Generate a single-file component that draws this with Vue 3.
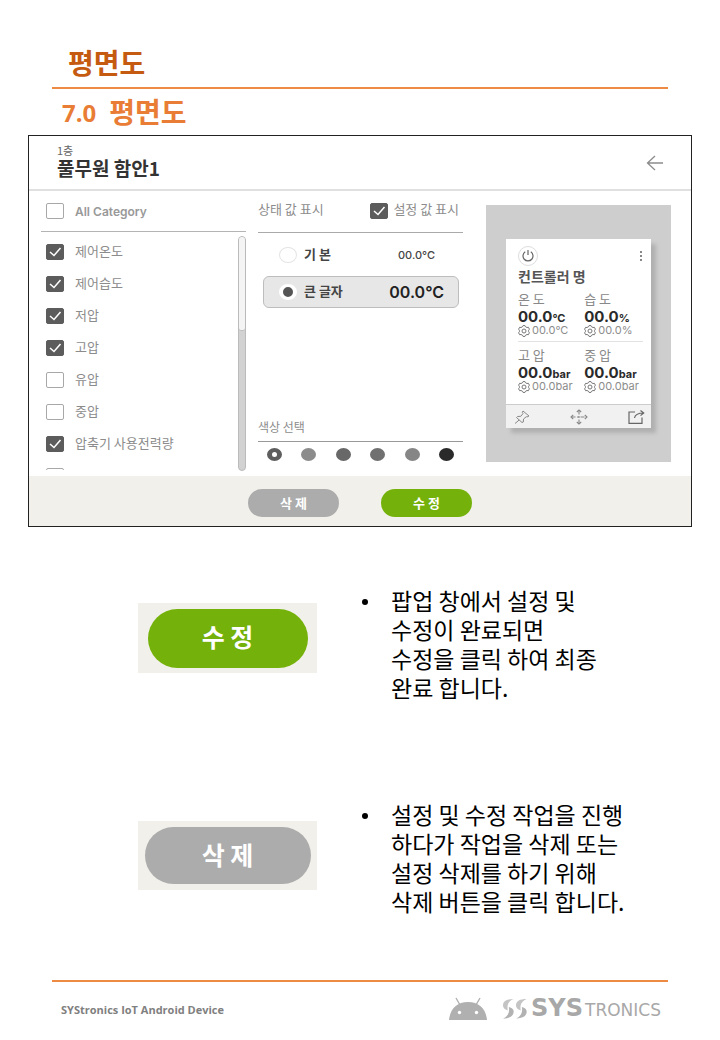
<script setup>
import { ref } from 'vue'

const allCategory = ref(false)
const showSetValue = ref(true)
const textSize = ref('large')
const colour = ref('c1')

const categories = ref([
  { name: '제어온도', on: true },
  { name: '제어습도', on: true },
  { name: '저압', on: true },
  { name: '고압', on: true },
  { name: '유압', on: false },
  { name: '중압', on: false },
  { name: '압축기 사용전력량', on: true },
  { name: '', on: false },
])

const sizes = [
  { id: 'basic', name: '기 본' },
  { id: 'large', name: '큰 글자' },
]

const colours = ['c1', 'c2', 'c3', 'c4', 'c5', 'c6']

const readings = [
  [
    { name: '온 도', unit: '°C' },
    { name: '습 도', unit: '%' },
  ],
  [
    { name: '고 압', unit: 'bar' },
    { name: '중 압', unit: 'bar' },
  ],
]

const notes = [
  {
    kind: 'edit',
    label: '수 정',
    lines: ['팝업 창에서 설정 및', '수정이 완료되면', '수정을 클릭 하여 최종', '완료 합니다.'],
  },
  {
    kind: 'remove',
    label: '삭 제',
    lines: ['설정 및 수정 작업을 진행', '하다가 작업을 삭제 또는', '설정 삭제를 하기 위해', '삭제 버튼을 클릭 합니다.'],
  },
]
</script>

<template>
  <main class="page">
    <h1 class="title">평면도</h1>
    <h2 class="subtitle"><span class="number">7.0</span> 평면도</h2>

    <section class="panel">
      <header class="panel-head">
        <div>
          <p class="floor">1층</p>
          <h3 class="site">풀무원 함안1</h3>
        </div>
        <button class="icon-button" type="button" aria-label="뒤로">
          <svg width="18" height="16" viewBox="0 0 18 16" fill="none" stroke="#8c8c8c" stroke-width="1.3">
            <path d="M17 8H1.5M9 1L1.5 8L9 15" />
          </svg>
        </button>
      </header>

      <div class="panel-body">
        <div class="categories">
          <label class="check all">
            <span class="box">
              <input v-model="allCategory" type="checkbox" />
              <svg viewBox="0 0 18 16"><path d="M4 8L8 11.5L14.5 4" /></svg>
            </span>
            All Category
          </label>
          <div class="scroller">
            <div class="list">
              <label v-for="(c, i) in categories" :key="i" class="check">
                <span class="box">
                  <input v-model="c.on" type="checkbox" :aria-label="c.name || '기타'" />
                  <svg viewBox="0 0 18 16"><path d="M4 8L8 11.5L14.5 4" /></svg>
                </span>
                <span class="check-text">{{ c.name }}</span>
              </label>
            </div>
            <div class="track"><div class="thumb"></div></div>
          </div>
        </div>

        <div class="options">
          <div class="options-head">
            <span class="check-text">상태 값 표시</span>
            <label class="check tight">
              <span class="box">
                <input v-model="showSetValue" type="checkbox" />
                <svg viewBox="0 0 18 16"><path d="M4 8L8 11.5L14.5 4" /></svg>
              </span>
              <span class="check-text">설정 값 표시</span>
            </label>
          </div>
          <label
            v-for="s in sizes"
            :key="s.id"
            class="size"
            :class="[s.id, { chosen: textSize === s.id }]"
          >
            <input v-model="textSize" type="radio" name="size" :value="s.id" />
            <span class="check-text">{{ s.name }}</span>
            <span class="sample-value">00.0°C</span>
          </label>
          <div class="colour-title">색상 선택</div>
          <div class="colours">
            <input
              v-for="c in colours"
              :key="c"
              v-model="colour"
              type="radio"
              name="colour"
              :value="c"
              :class="c"
              :aria-label="c"
            />
          </div>
        </div>

        <div class="preview">
          <article class="card">
            <div class="card-main">
              <div class="card-top">
                <button class="power" type="button" aria-label="전원">
                  <svg width="14" height="14" viewBox="0 0 14 14" fill="none" stroke="#666" stroke-width="1.2">
                    <path d="M7 1V6M4.2 2.8A5 5 0 1 0 9.8 2.8" />
                  </svg>
                </button>
                <button class="icon-button" type="button" aria-label="더보기">
                  <svg width="4" height="12" viewBox="0 0 4 12" fill="#888">
                    <path d="M1 1h2v2H1zM1 5h2v2H1zM1 9h2v2H1z" />
                  </svg>
                </button>
              </div>
              <h4 class="card-name">컨트롤러 명</h4>
              <div v-for="(row, i) in readings" :key="i" class="readings">
                <div v-for="r in row" :key="r.name">
                  <div class="reading-name">{{ r.name }}</div>
                  <div class="reading-value">00.0<small>{{ r.unit }}</small></div>
                  <div class="reading-set">
                    <svg width="12" height="12" viewBox="0 0 12 12" fill="none" stroke="#777" stroke-width="1">
                      <path d="M4.4 1.8L5 .6H7L7.6 1.8L9 2.5L10.4 2.3L11.4 4.2L10.6 5.3V6.7L11.4 7.8L10.4 9.7L9 9.5L7.6 10.2L7 11.4H5L4.4 10.2L3 9.5L1.6 9.7L.6 7.8L1.4 6.7V5.3L.6 4.2L1.6 2.3L3 2.5Z" />
                      <circle cx="6" cy="6" r="2" />
                    </svg>
                    00.0{{ r.unit }}
                  </div>
                </div>
              </div>
            </div>
            <div class="card-tools">
              <button class="icon-button" type="button" aria-label="고정">
                <svg width="16" height="14" viewBox="0 0 16 14" fill="none" stroke="#888" stroke-width="1">
                  <path d="M9 1L15 6L13 7L12.3 6.7L9.5 9L9.3 12L8 12.5L2.5 7.5L3.5 6.5L6.8 6.3L9 3.5L8.3 2.3ZM5.2 10L1 13.5" />
                </svg>
              </button>
              <button class="icon-button" type="button" aria-label="이동">
                <svg width="18" height="16" viewBox="0 0 18 16" fill="none" stroke="#888" stroke-width="1.1">
                  <path d="M6.8 3L9 1L11.2 3M6.8 13L9 15L11.2 13M3.2 6L1 8L3.2 10M14.8 6L17 8L14.8 10" />
                  <path d="M9 1.5V14.5M1.5 8H16.5" stroke-dasharray="4 1.5 2 1.5" />
                </svg>
              </button>
              <button class="icon-button" type="button" aria-label="내보내기">
                <svg width="17" height="14" viewBox="0 0 17 14" fill="none" stroke="#666" stroke-width="1.2">
                  <path d="M7 2H1V13.3H14V7.5M6.5 8C7 5 9 3 15.5 3M12.5 .6L15.7 3L12.5 5.6" />
                </svg>
              </button>
            </div>
          </article>
        </div>
      </div>

      <footer class="panel-foot">
        <button class="pill remove" type="button">삭 제</button>
        <button class="pill edit" type="button">수 정</button>
      </footer>
    </section>

    <section v-for="n in notes" :key="n.kind" class="note">
      <div class="swatch" :class="n.kind">
        <button class="big-pill" :class="n.kind" type="button">{{ n.label }}</button>
      </div>
      <ul class="note-text">
        <li>
          <span v-for="line in n.lines" :key="line">{{ line }}</span>
        </li>
      </ul>
    </section>

    <footer class="page-foot">
      <span class="product">SYStronics IoT Android Device</span>
      <div class="brand">
        <svg width="38" height="24" viewBox="0 0 38 24">
          <path d="M0 23C1 12 8 5 19 5S37 12 38 23Z" fill="#b0b0b0" />
          <path d="M7 1L11 8M31 1L27 8" stroke="#b0b0b0" stroke-width="1.4" />
          <circle cx="10.5" cy="15.5" r="1.7" fill="#fff" />
          <circle cx="27.5" cy="15.5" r="1.7" fill="#fff" />
        </svg>
        <svg class="mark" width="25" height="20" viewBox="0 0 25 20">
          <g id="bolt">
            <path d="M11.5 0C5 0 1 2 1 6.500C1 8.800 2.500 10.500 5.800 11.500C4.800 6.500 6 2.500 11.5 0Z" fill="#c4c4c4" />
            <path d="M1 19.500C7.500 19.500 11.700 17 11.700 12.500C11.700 10.300 10 8.800 6.800 8C8 13 6 17.500 1 19.500Z" fill="#b2b2b2" />
          </g>
          <use href="#bolt" x="13" />
        </svg>
        <span class="wordmark"><b>SYS</b>TRONICS</span>
      </div>
    </footer>
  </main>
</template>

<style>
body {
  background: #fff;
}
</style>

<style scoped>
.page {
  font-family: "Noto Sans CJK KR", sans-serif;
  color: #000;
  padding-top: 43px;
}
h1, h2, h3, h4, p, ul {
  margin: 0;
  padding: 0;
}
button {
  font-family: inherit;
  border: 0;
  padding: 0;
  background: none;
}
svg {
  display: block;
}
.title {
  margin: 0 52px;
  padding: 0 16px 6px;
  border-bottom: 2px solid #ed8b45;
  font-size: 28px;
  line-height: 38px;
  color: #c55a11;
}
.subtitle {
  margin: 0 62px;
  padding-bottom: 2px;
  display: flex;
  align-items: center;
  gap: 13px;
  font-size: 28px;
  line-height: 44px;
  color: #e97d35;
}
.number {
  padding-top: 4px;
  font-family: "Open Sans", sans-serif;
  font-size: 24px;
  line-height: 40px;
}
.panel {
  margin: 0 28px;
  border: 1px solid #222;
}
.panel-head {
  display: flex;
  justify-content: space-between;
  align-items: center;
  height: 53px;
  padding: 0 27px 0 28px;
  border-bottom: 2px solid #e0e0e0;
}
.floor {
  font-size: 11px;
  line-height: 14px;
  color: #666;
}
.site {
  padding-bottom: 4px;
  font-size: 19px;
  line-height: 22px;
  font-weight: 700;
  color: #333;
}
.panel-body {
  display: grid;
  grid-template-columns: 205fr 205fr 196fr;
  column-gap: 12px;
  padding: 0 20px 0 12px;
  height: 285px;
}
.check {
  display: flex;
  align-items: center;
  gap: 11px;
  height: 32px;
  flex: none;
  white-space: nowrap;
  font-size: 13px;
  color: #8c8c8c;
}
.check.tight {
  gap: 5px;
}
.check-text {
  line-height: 20px;
  padding-bottom: 3px;
}
.box {
  display: grid;
  width: 18px;
  height: 16px;
}
.box > * {
  grid-area: 1 / 1;
}
.box input {
  appearance: none;
  margin: 0;
  width: 18px;
  height: 16px;
  border: 1px solid #a8a8a8;
  border-radius: 2px;
  background: #fff;
}
.box input:checked {
  background: #5c5c5c;
  border-color: #5c5c5c;
}
.box svg {
  width: 18px;
  height: 16px;
  pointer-events: none;
  fill: none;
  stroke: none;
  stroke-width: 1.5;
}
.box input:checked + svg {
  stroke: #fff;
}
.categories,
.options,
.preview {
  min-width: 0;
}
.check.all {
  height: 40px;
  padding-left: 5px;
  border-bottom: 1px solid #b4b4b4;
  font-family: Inter, sans-serif;
  font-size: 12px;
  font-weight: 600;
  color: #999;
}
.scroller {
  display: flex;
  justify-content: space-between;
  padding-top: 4px;
}
.list {
  display: flex;
  flex-direction: column;
  height: 234px;
  overflow: hidden;
  padding-left: 5px;
}
.track {
  width: 6px;
  height: 233px;
  border: 1px solid #bbb;
  border-radius: 4px;
  background: #d2d2d2;
}
.thumb {
  height: 93px;
  border-radius: 4px;
  background: #f4f4f4;
  border-bottom: 1px solid #bbb;
}
.options-head {
  display: flex;
  justify-content: space-between;
  align-items: center;
  height: 39px;
  padding: 0 4px 2px 0;
  border-bottom: 1px solid #aaa;
  font-size: 13px;
  color: #8c8c8c;
}
.size {
  display: flex;
  align-items: center;
  gap: 7px;
  height: 30px;
  margin: 0 4px 0 5px;
  padding: 0 14px 0 15px;
  border: 1px solid transparent;
  border-radius: 6px;
  font-size: 13px;
  font-weight: 700;
  color: #444;
}
.size.basic {
  margin-top: 6px;
}
.size.chosen {
  background: #e7e7e7;
  border-color: #bdbdbd;
}
.size.large {
  margin-top: 5px;
}
.size input {
  appearance: none;
  margin: 0;
  width: 18px;
  height: 16px;
  border: 1px solid #e4e4e4;
  border-radius: 50%;
  background: #fff;
}
.size input:checked {
  border: 3px solid #fff;
  border-left-width: 4px;
  border-right-width: 4px;
  background: #555;
}
.sample-value {
  margin-left: auto;
  font-family: Inter, sans-serif;
}
.basic .sample-value {
  padding-right: 9px;
  font-size: 11px;
  font-weight: 500;
}
.large .sample-value {
  font-size: 16px;
  font-weight: 600;
  color: #222;
}
.colour-title {
  margin-top: 109px;
  padding-bottom: 4px;
  border-bottom: 1px solid #999;
  font-size: 12px;
  line-height: 20px;
  color: #8c8c8c;
}
.colours {
  display: flex;
  justify-content: space-between;
  padding: 6px 9px;
}
.colours input {
  appearance: none;
  margin: 0;
  width: 15px;
  height: 13px;
  border-radius: 50%;
}
.colours input:checked {
  background: #fff;
  border: 4px solid #5e5e5e;
  border-left-width: 5px;
  border-right-width: 5px;
}
.c2 { background: #8c8c8c; }
.c3 { background: #686868; }
.c4 { background: #707070; }
.c5 { background: #868686; }
.c6 { background: #2a2a2a; }
.preview {
  margin: 14px 0 14px 11px;
  padding: 34px 20px;
  background: #cecece;
}
.card {
  background: #fff;
  box-shadow: 5px 5px 4px #b0b0b0;
}
.card-main {
  padding: 7px 8px 0 12px;
  height: 158px;
}
.card-top {
  display: flex;
  justify-content: space-between;
  align-items: center;
}
.power {
  display: grid;
  place-items: center;
  width: 20px;
  height: 20px;
  border: 1px solid #ddd;
  border-radius: 50%;
}
.card-name {
  padding-bottom: 2px;
  font-size: 14px;
  line-height: 20px;
  color: #555;
}
.readings {
  display: grid;
  grid-template-columns: 53% 47%;
  padding-top: 2px;
  white-space: nowrap;
}
.readings + .readings {
  margin-top: 4px;
  padding-top: 4px;
  border-top: 1px solid #e2e2e2;
}
.reading-name {
  padding-bottom: 2px;
  font-size: 13px;
  line-height: 17px;
  color: #888;
}
.reading-value {
  height: 15px;
  font-family: Inter, sans-serif;
  font-size: 15px;
  line-height: 15px;
  font-weight: 700;
  color: #2a2a2a;
}
.reading-value small {
  font-size: 11px;
  line-height: 11px;
}
.reading-set {
  display: flex;
  align-items: center;
  gap: 2px;
  font-family: Inter, sans-serif;
  font-size: 11px;
  line-height: 13px;
  color: #8c8c8c;
}
.card-tools {
  display: flex;
  justify-content: space-between;
  align-items: center;
  height: 23px;
  padding: 0 6px 0 8px;
  border-top: 1px solid #ccc;
  background: #f1f1f1;
}
.panel-foot {
  display: flex;
  justify-content: center;
  align-items: center;
  gap: 42px;
  height: 47px;
  padding-top: 3px;
  background: #f1f0ea;
}
.pill {
  width: 91px;
  height: 28px;
  border-radius: 14px;
  font-size: 13px;
  line-height: 26px;
  font-weight: 700;
  color: #fff;
}
.pill.remove, .big-pill.remove {
  background: #acacac;
}
.pill.edit, .big-pill.edit {
  background: #74b10a;
}
.note {
  display: grid;
  grid-template-columns: 179px 1fr;
  gap: 74px;
  margin-top: 59px;
  padding-left: 138px;
}
.note + .note {
  margin-top: 98px;
}
.swatch {
  display: grid;
  place-items: center;
  height: 70px;
  margin-top: 17px;
  background: #f1f0ea;
}
.swatch.remove {
  height: 69px;
  margin-top: 21px;
}
.big-pill {
  width: 160px;
  height: 59px;
  padding-bottom: 4px;
  border-radius: 30px;
  font-size: 25px;
  line-height: 50px;
  font-weight: 700;
  color: #fff;
}
.big-pill.remove {
  width: 166px;
  height: 57px;
}
.note-text {
  list-style: none;
  font-size: 23px;
  line-height: 29px;
}
.note-text li {
  display: flex;
  flex-direction: column;
  position: relative;
}
.note-text li::before {
  content: "";
  position: absolute;
  left: -29px;
  top: 13px;
  width: 6px;
  height: 6px;
  border-radius: 50%;
  background: #000;
}
.page-foot {
  display: flex;
  justify-content: space-between;
  align-items: center;
  margin: 64px 52px 0;
  padding: 14px 7px 0 9px;
  border-top: 2px solid #ed8b45;
}
.product {
  font-family: "Open Sans", sans-serif;
  font-size: 11px;
  font-weight: 700;
  color: #808080;
}
.brand {
  display: flex;
  align-items: center;
}
.mark {
  margin: 0 4px 0 15px;
}
.wordmark {
  font-family: "DejaVu Sans", sans-serif;
  font-size: 17px;
  line-height: 24px;
  color: #a8a8a8;
}
.wordmark b {
  padding-right: 2px;
  font-size: 24px;
}
</style>
